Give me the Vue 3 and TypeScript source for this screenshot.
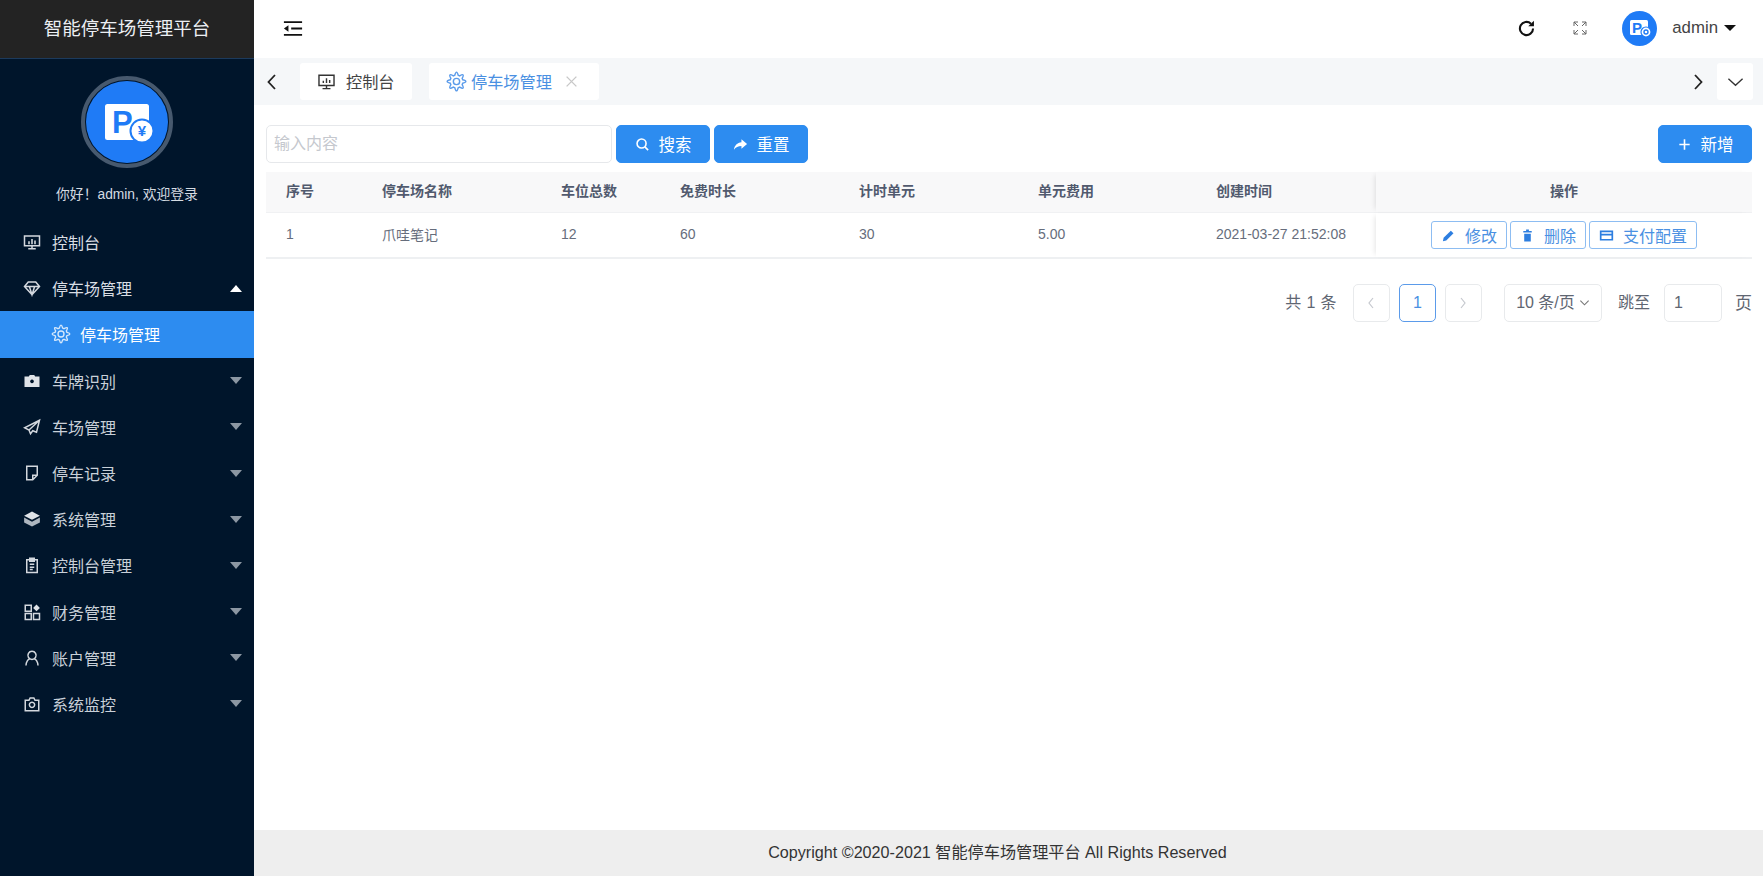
<template>
  <div class="layout">
    <aside class="sidebar">
      <div class="brand"><span>智能停车场管理平台</span></div>
      <div class="profile">
        <div class="avatar-ring">
          <svg class="logo" viewBox="0 0 82 82">
            <circle cx="41" cy="41" r="41" fill="#1f7bf6" />
            <rect x="19" y="23" width="44" height="36" rx="2.500" fill="#fff" />
            <text x="26" y="52" class="logo-p">P</text>
            <circle cx="56" cy="50" r="11.500" fill="#fff" stroke="#1f7bf6" stroke-width="2" />
            <text x="56" y="55" class="logo-yen">¥</text>
          </svg>
        </div>
        <div class="welcome">你好！admin, 欢迎登录</div>
      </div>
      <nav class="menu">
        <template v-for="item in menu" :key="item.label">
          <div class="menu-item" :class="{ open: item.open }">
            <svg class="menu-icon" viewBox="0 0 24 24">
              <path v-for="d in item.stroke" :key="d" :d="d" class="line" />
              <path v-for="d in item.fill" :key="d" :d="d" class="solid" />
              <path v-for="d in item.dim" :key="d" :d="d" class="dim" />
            </svg>
            <span>{{ item.label }}</span>
            <i v-if="item.caret" class="caret" :class="{ up: item.open }"></i>
          </div>
          <div v-if="item.open" class="menu-sub">
            <svg class="gear" viewBox="0 0 24 24"><path :d="gearPath" /><circle cx="12" cy="12" r="3.600" /></svg>
            <span>停车场管理</span>
          </div>
        </template>
      </nav>
    </aside>

    <main class="main">
      <header class="topbar">
        <svg class="collapse" viewBox="0 0 22 18">
          <path d="M1 2h20M9 9h12M1 16h20" />
          <path d="M6 5.500v7L1 9z" class="tri" />
        </svg>
        <div class="top-right">
          <svg class="refresh" viewBox="0 0 24 24">
            <path d="M19.500 12a7.500 7.500 0 1 1-2.400-5.500" />
            <path d="M20.500 3v6.500H14z" class="tri" />
          </svg>
          <svg class="expand" viewBox="0 0 16 16">
            <path d="M2 6V2h4M2 2l4 4M10 2h4v4M14 2l-4 4M2 10v4h4M2 14l4-4M14 10v4h-4M14 14l-4-4" />
          </svg>
          <svg class="mini-avatar" viewBox="0 0 35 35">
            <circle cx="17.500" cy="17.500" r="17.500" fill="#1f7bf6" />
            <rect x="8" y="9" width="18" height="15" rx="1.500" fill="#fff" />
            <text x="10" y="21.500" class="mini-p">P</text>
            <circle cx="24" cy="21" r="5" fill="#fff" stroke="#1f7bf6" stroke-width="1.200" />
            <circle cx="24" cy="21" r="2" fill="none" stroke="#1f7bf6" stroke-width="1.400" />
          </svg>
          <span class="user">admin</span>
          <i class="user-caret"></i>
        </div>
      </header>

      <div class="tabs">
        <svg class="chev" viewBox="0 0 12 18"><path d="M9 2L2.500 9 9 16" /></svg>
        <div class="tab tab-home">
          <svg class="tab-icon" viewBox="0 0 24 24">
            <path d="M2.500 4h19v13h-19zM7 21h10M12 17v4M8 14v-3M12 14V8M16 14v-4" />
          </svg>
          <span>控制台</span>
        </div>
        <div class="tab tab-active">
          <svg class="gear blue" viewBox="0 0 24 24"><path :d="gearPath" /><circle cx="12" cy="12" r="3.600" /></svg>
          <span>停车场管理</span>
          <svg class="close" viewBox="0 0 12 12"><path d="M1.500 1.500l9 9M10.500 1.500l-9 9" /></svg>
        </div>
        <div class="tabs-fill"></div>
        <svg class="chev" viewBox="0 0 12 18"><path d="M3 2l6.500 7L3 16" /></svg>
        <div class="tab-more">
          <svg viewBox="0 0 18 10"><path d="M1.500 1.500L9 8.500l7.500-7" /></svg>
        </div>
      </div>

      <section class="content">
        <div class="toolbar">
          <input class="search" placeholder="输入内容" />
          <button class="btn">
            <svg viewBox="0 0 16 16"><circle cx="7" cy="7" r="4.800" /><path d="M10.500 10.500L14 14" /></svg>
            <span>搜索</span>
          </button>
          <button class="btn">
            <svg viewBox="0 0 16 16"><path d="M9 2.500L15 7.500 9 12.500V9.500C5.500 9.500 3 10.800 1 13.500 1.500 9 4.500 6 9 5.500z" class="tri" /></svg>
            <span>重置</span>
          </button>
          <div class="toolbar-fill"></div>
          <button class="btn">
            <svg viewBox="0 0 16 16"><path d="M8 2.500v11M2.500 8h11" /></svg>
            <span>新增</span>
          </button>
        </div>

        <div class="table">
          <div class="thead">
            <div v-for="col in columns" :key="col" class="cell">{{ col }}</div>
            <div class="cell ops">操作</div>
          </div>
          <div class="tbody">
            <div v-for="(val, i) in row" :key="i" class="cell">{{ val }}</div>
            <div class="cell ops">
              <button class="act">
                <svg viewBox="0 0 16 16"><path d="M2 14l.8-3.600L10.500 2.800l2.800 2.800-7.700 7.600z" class="tri" /></svg>
                <span>修改</span>
              </button>
              <button class="act">
                <svg viewBox="0 0 16 16"><path d="M3.500 3.200h9v1.600h-9zM6.500 1.600h3v1.600h-3zM4.500 6h7v8.400h-7z" class="tri" /></svg>
                <span>删除</span>
              </button>
              <button class="act">
                <svg viewBox="0 0 16 16"><path d="M1.800 3.500h12.400v9H1.800zM1.800 7h12.400" /></svg>
                <span>支付配置</span>
              </button>
            </div>
          </div>
        </div>

        <div class="pager">
          <span class="total">共 1 条</span>
          <div class="page-box">
            <svg viewBox="0 0 10 14"><path d="M7 2L3 7l4 5" /></svg>
          </div>
          <div class="page-box current">1</div>
          <div class="page-box">
            <svg viewBox="0 0 10 14"><path d="M3 2l4 5-4 5" /></svg>
          </div>
          <div class="page-size">
            <span>10 条/页</span>
            <svg viewBox="0 0 12 8"><path d="M1.500 1.500L6 6l4.500-4.500" /></svg>
          </div>
          <span class="jump">跳至</span>
          <div class="page-input">1</div>
          <span class="page-unit">页</span>
        </div>
      </section>

      <footer class="footer">Copyright ©2020-2021 智能停车场管理平台 All Rights Reserved</footer>
    </main>
  </div>
</template>

<script setup lang="ts">
interface MenuItem {
  label: string
  stroke?: string[]
  fill?: string[]
  dim?: string[]
  caret?: boolean
  open?: boolean
}

const menu: MenuItem[] = [
  {
    label: '控制台',
    stroke: ['M2 4h20v13H2zM7 21h10M12 17v4'],
    fill: ['M7 11h2v4H7zM11 8h2v7h-2zM15 10h2v5h-2z'],
  },
  {
    label: '停车场管理',
    stroke: ['M7 4h10l5 6-10 11L2 10zM2 10h20M8.500 10L12 21l3.500-11'],
    caret: true,
    open: true,
  },
  {
    label: '车牌识别',
    fill: ['M9 4h6l1.200 2H22V20H2V6h5.800zM12 10a2.500 2.500 0 1 0 .01 0z'],
    caret: true,
  },
  {
    label: '车场管理',
    stroke: ['M22 3L2 13l6 3 2 5 3-4 5 2zM22 3L8 16'],
    caret: true,
  },
  {
    label: '停车记录',
    stroke: ['M5 3h14v12l-6 6H5zM19 15h-6v6'],
    caret: true,
  },
  {
    label: '系统管理',
    fill: ['M12 2l10.500 5.500L12 13 1.500 7.500z'],
    dim: ['M1.500 10l10.500 5.500L22.500 10v6.500L12 22 1.500 16.500z'],
    caret: true,
  },
  {
    label: '控制台管理',
    stroke: ['M5 5h14v17H5zM9 3h6v4H9zM9 11h6M9 15h6M9 18h4'],
    caret: true,
  },
  {
    label: '财务管理',
    stroke: ['M3 3h8v8H3zM3 14h8v8H3zM14 14h8v8h-8z'],
    fill: ['M18 2l4.500 4.500L18 11l-4.500-4.500z'],
    caret: true,
  },
  {
    label: '账户管理',
    stroke: ['M12 3a5.500 5.500 0 1 0 .01 0zM4 22c0-5 3-8.500 5-9M20 22c0-5-3-8.500-5-9'],
    caret: true,
  },
  {
    label: '系统监控',
    stroke: ['M3 7h5l1.500-3h5L16 7h5v14H3zM12 9.500a3.500 3.500 0 1 0 .01 0z'],
    caret: true,
  },
]

const columns = ['序号', '停车场名称', '车位总数', '免费时长', '计时单元', '单元费用', '创建时间']
const row = ['1', '爪哇笔记', '12', '60', '30', '5.00', '2021-03-27 21:52:08']

// outline of the cog used in the submenu and the active tab
const buildGear = (teeth: number, outer: number, inner: number): string => {
  const pts: string[] = []
  for (let i = 0; i < teeth; i++) {
    const step = (Math.PI * 2) / teeth
    const a = i * step
    const p = (r: number, ang: number) =>
      `${(12 + r * Math.cos(ang)).toFixed(2)} ${(12 + r * Math.sin(ang)).toFixed(2)}`
    pts.push(`${i === 0 ? 'M' : 'L'}${p(inner, a - step * 0.34)}`)
    pts.push(`Q${p(outer + 1.2, a)} ${p(inner, a + step * 0.34)}`)
  }
  return pts.join(' ') + 'Z'
}

const gearPath = buildGear(8, 13, 7.4)
</script>

<style>
html,
body {
  margin: 0;
  height: 100%;
  background: #fff;
}
</style>

<style scoped>
* {
  box-sizing: border-box;
}

.layout {
  display: flex;
  width: 1763px;
  height: 876px;
  overflow: hidden;
  font-family: "Liberation Sans", "Noto Sans CJK SC", sans-serif;
  color: #515a6e;
}

.sidebar {
  width: 254px;
  flex-shrink: 0;
  background: #00152b;
  display: flex;
  flex-direction: column;
}

.brand {
  height: 59px;
  flex-shrink: 0;
  padding-bottom: 4px;
  background: #232323;
  border-bottom: 1px solid #1c3a5c;
  color: #eceff3;
  font-size: 18.500px;
  display: flex;
  align-items: center;
  justify-content: center;
}

.profile {
  display: flex;
  flex-direction: column;
  align-items: center;
  padding-top: 17px;
}

.avatar-ring {
  width: 92px;
  height: 92px;
  border-radius: 50%;
  border: 4px solid #47596e;
  padding: 1px;
  background: #00152b;
}

.logo {
  display: block;
  width: 100%;
  height: 100%;
}

.logo-p {
  font: bold 31px "Liberation Sans", sans-serif;
  fill: #1f7bf6;
}

.logo-yen {
  font: bold 15px "Liberation Sans", sans-serif;
  fill: #1f7bf6;
  text-anchor: middle;
}

.welcome {
  margin-top: 17px;
  height: 20px;
  line-height: 20px;
  font-size: 13.800px;
  color: #d5dbe2;
}

.menu {
  margin-top: 14px;
}

.menu-item {
  height: 46.200px;
  display: flex;
  align-items: center;
  padding: 0 12px 0 23px;
  color: #c9d0d8;
  font-size: 16px;
}

.menu-item.open,
.menu-item:first-child {
  color: #d9dee4;
}

.menu-icon {
  width: 18px;
  height: 18px;
  margin-right: 11px;
  flex-shrink: 0;
}

.line {
  fill: none;
  stroke: #d3d8de;
  stroke-width: 2;
}

.solid {
  fill: #dfe3e8;
  fill-rule: evenodd;
}

.dim {
  fill: #aeb6bf;
}

.caret {
  margin-left: auto;
  width: 0;
  height: 0;
  margin-right: 0;
  border-left: 6.500px solid transparent;
  border-right: 6.500px solid transparent;
  border-top: 7px solid #8c97a3;
}

.caret.up {
  border-top: 0;
  border-bottom: 7px solid #fff;
}

.menu-sub {
  height: 46.200px;
  background: #2d8cf0;
  display: flex;
  align-items: center;
  padding-left: 51px;
  color: #fff;
  font-size: 16px;
  gap: 9px;
}

.gear {
  width: 20px;
  height: 20px;
  fill: none;
  stroke: #d6e8fb;
  stroke-width: 1.600;
  flex-shrink: 0;
}

.gear.blue {
  stroke: #5b9bea;
  width: 21px;
  height: 21px;
}

.main {
  flex: 1;
  min-width: 0;
  display: flex;
  flex-direction: column;
  background: #fff;
}

.topbar {
  height: 58px;
  flex-shrink: 0;
  display: flex;
  align-items: center;
  justify-content: space-between;
  padding: 0 27px 2px 29px;
}

.collapse {
  width: 20px;
  height: 17px;
  fill: none;
  stroke: #111;
  stroke-width: 2;
}

.tri {
  fill: currentColor;
  stroke: none;
}

.collapse .tri,
.refresh .tri {
  color: #111;
}

.top-right {
  display: flex;
  align-items: center;
}

.refresh {
  width: 21px;
  height: 21px;
  fill: none;
  stroke: #111;
  stroke-width: 2.400;
}

.expand {
  width: 16px;
  height: 16px;
  margin-left: 35px;
  fill: none;
  stroke: #666;
  stroke-width: 1;
}

.mini-avatar {
  width: 35px;
  height: 35px;
  margin-left: 34px;
}

.mini-p {
  font: bold 15px "Liberation Sans", sans-serif;
  fill: #1f7bf6;
}

.user {
  margin-left: 15px;
  font-size: 16.800px;
  color: #444;
}

.user-caret {
  margin-left: 6px;
  width: 0;
  height: 0;
  border-left: 6.500px solid transparent;
  border-right: 6.500px solid transparent;
  border-top: 6.500px solid #111;
}

.tabs {
  height: 47px;
  flex-shrink: 0;
  background: #f5f7f9;
  display: flex;
  align-items: center;
  padding: 0 10px 0 12px;
}

.chev {
  width: 12px;
  height: 18px;
  flex-shrink: 0;
  fill: none;
  stroke: #222;
  stroke-width: 1.800;
}

.tab {
  height: 37px;
  background: #fff;
  border-radius: 3px;
  display: flex;
  align-items: center;
  font-size: 16.200px;
}

.tab span {
  padding-bottom: 2px;
}

.tab-home {
  width: 112px;
  margin-left: 22px;
  padding-left: 17px;
  color: #444;
}

.tab-icon {
  width: 19px;
  height: 19px;
  margin-right: 10px;
  fill: none;
  stroke: #333;
  stroke-width: 1.800;
}

.tab-active {
  width: 170px;
  margin-left: 17px;
  padding-left: 17px;
  color: #4a90e2;
}

.tab-active span {
  margin-left: 4px;
}

.close {
  width: 13px;
  height: 13px;
  margin-left: 13px;
  fill: none;
  stroke: #c8c8c8;
  stroke-width: 1.300;
}

.tabs-fill {
  flex: 1;
}

.tab-more {
  width: 36px;
  height: 37px;
  margin-left: 13px;
  background: #fff;
  border-radius: 3px;
  display: flex;
  align-items: center;
  justify-content: center;
}

.tab-more svg {
  width: 17px;
  height: 10px;
  fill: none;
  stroke: #333;
  stroke-width: 1.400;
}

.content {
  flex: 1;
  padding: 20px 11px 0 12px;
}

.toolbar {
  display: flex;
  align-items: center;
  height: 38px;
}

.search {
  width: 346px;
  height: 38px;
  border: 1px solid #e6e8eb;
  border-radius: 5px;
  padding: 0 7px;
  font: 16px "Liberation Sans", "Noto Sans CJK SC", sans-serif;
  outline: none;
}

.search::placeholder {
  color: #c5c8ce;
}

.btn {
  width: 94px;
  height: 38px;
  margin-left: 4px;
  border: 1px solid #2d8cf0;
  border-radius: 5px;
  background: #2d8cf0;
  color: #fff;
  font: 16.500px "Liberation Sans", "Noto Sans CJK SC", sans-serif;
  display: flex;
  align-items: center;
  justify-content: center;
  gap: 9px;
  padding: 0;
}

.btn svg {
  width: 15px;
  height: 15px;
  fill: none;
  stroke: #fff;
  stroke-width: 1.700;
}

.btn .tri {
  color: #fff;
}

.toolbar-fill {
  flex: 1;
}

.table {
  margin-top: 9px;
  font-size: 14px;
}

.thead,
.tbody {
  display: grid;
  grid-template-columns: 96px 179px 119px 179px 179px 178px 180px 376px;
  align-items: center;
}

.thead {
  height: 40px;
  background: #f8f8f9;
  font-weight: 700;
  color: #515a6e;
}

.thead .cell {
  padding-bottom: 4px;
}

.tbody {
  height: 47px;
  border-bottom: 2px solid #eef0f2;
  border-top: 1px solid #f0f1f3;
  color: #666d7c;
}

.cell {
  padding-left: 20px;
  white-space: nowrap;
  height: 100%;
  display: flex;
  align-items: center;
}

.tbody .cell:not(.ops) {
  padding-bottom: 2px;
}

.cell.ops {
  padding-left: 0;
  justify-content: center;
  gap: 3px;
  box-shadow: -4px 0 5px -3px rgba(0, 0, 0, 0.1);
}

.act {
  height: 28px;
  padding: 0 9px;
  background: #fff;
  border: 1px solid #8dbdf2;
  border-radius: 3px;
  color: #4a90e2;
  font: 16px "Liberation Sans", "Noto Sans CJK SC", sans-serif;
  display: flex;
  align-items: center;
  gap: 9px;
}

.act svg {
  width: 15px;
  height: 15px;
  fill: none;
  stroke: #2d7ee0;
  stroke-width: 1.800;
  color: #2d7ee0;
}

.pager {
  margin-top: 25px;
  display: flex;
  align-items: center;
  justify-content: flex-end;
  height: 38px;
  font-size: 16px;
  color: #5f6672;
}

.total,
.jump,
.page-unit,
.page-size span {
  padding-bottom: 4px;
}

.total {
  margin-right: 16px;
  letter-spacing: 0.400px;
}

.page-box {
  width: 37px;
  height: 38px;
  border: 1px solid #e8eaec;
  border-radius: 5px;
  margin-right: 9px;
  display: flex;
  align-items: center;
  justify-content: center;
}

.page-box svg {
  width: 10px;
  height: 14px;
  fill: none;
  stroke: #c5c8ce;
  stroke-width: 1.200;
}

.page-box.current {
  border-color: #5b9bea;
  color: #4a90e2;
}

.page-size {
  width: 98px;
  height: 38px;
  margin-left: 13px;
  border: 1px solid #e8eaec;
  border-radius: 5px;
  display: flex;
  align-items: center;
  justify-content: center;
  gap: 4px;
}

.page-size svg {
  width: 11px;
  height: 8px;
  fill: none;
  stroke: #777;
  stroke-width: 1.200;
}

.jump {
  margin-left: 16px;
}

.page-input {
  width: 58px;
  height: 38px;
  margin-left: 14px;
  padding-left: 9px;
  border: 1px solid #e8eaec;
  border-radius: 5px;
  display: flex;
  align-items: center;
}

.page-unit {
  margin-left: 13px;
  font-size: 17px;
}

.footer {
  height: 46px;
  flex-shrink: 0;
  padding: 0 22px 4px 0;
  background: #eee;
  display: flex;
  align-items: center;
  justify-content: center;
  font-size: 16.150px;
  color: #333;
}
</style>
